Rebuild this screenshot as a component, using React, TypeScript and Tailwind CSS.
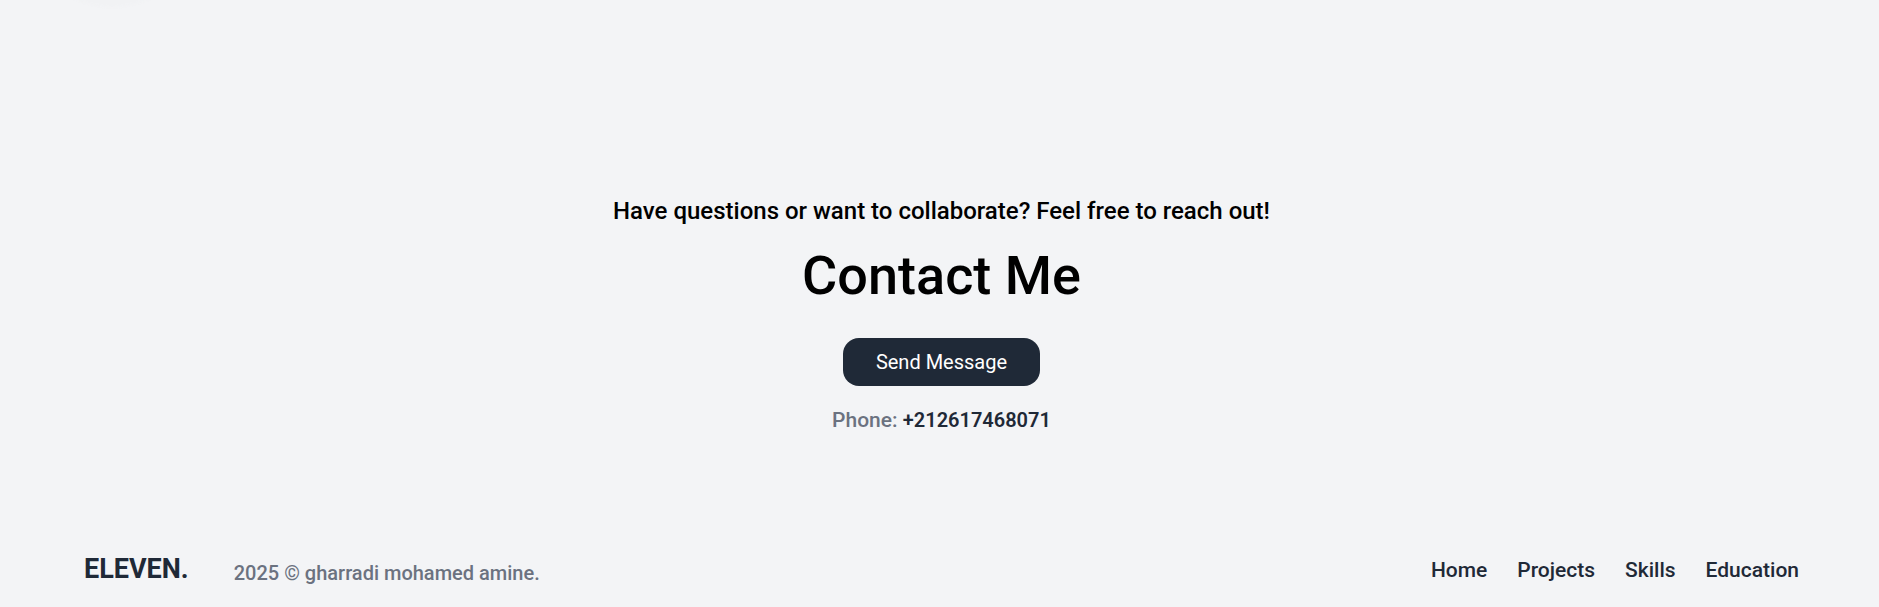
const links = ["Home", "Projects", "Skills", "Education"];

export default function App() {
  return (
    <div className="relative flex min-h-screen flex-col overflow-hidden bg-[#f3f4f6] font-['Roboto',sans-serif] font-medium text-black">
      <div aria-hidden="true" className="absolute -top-[169px] left-6 size-44 rounded-full bg-[#f1f2f4] blur-[1px]" />
      <section id="contact" className="flex flex-col items-center pt-[195px] pr-20 pl-[84px] text-center">
        <p className="text-2xl">Have questions or want to collaborate? Feel free to reach out!</p>
        <h2 className="mt-[13px] text-[54px] leading-[72px]">Contact Me</h2>
        <a href="#contact" className="mt-[26px] rounded-2xl bg-[#1f2937] px-[33px] py-2.5 text-xl font-normal text-white">
          Send Message
        </a>
        <p className="mt-5 text-[21px] leading-7 text-[#6b7280]">
          Phone: <span className="text-xl font-semibold text-[#1f2937]">+212617468071</span>
        </p>
      </section>
      <footer className="mt-auto flex items-center justify-between pr-20 pb-5 pl-[84px]">
        <div className="flex items-end gap-[45px]">
          <a href="#home" className="pb-0.5 text-[27px] leading-8 font-bold text-[#1f2937]">ELEVEN.</a>
          <p className="text-xl text-[#6b7280]">2025 © gharradi mohamed amine.</p>
        </div>
        <nav className="flex gap-[30px] text-[21px] leading-7 text-[#1f2937]">
          {links.map((link) => (
            <a key={link} href={`#${link.toLowerCase()}`}>{link}</a>
          ))}
        </nav>
      </footer>
    </div>
  );
}
